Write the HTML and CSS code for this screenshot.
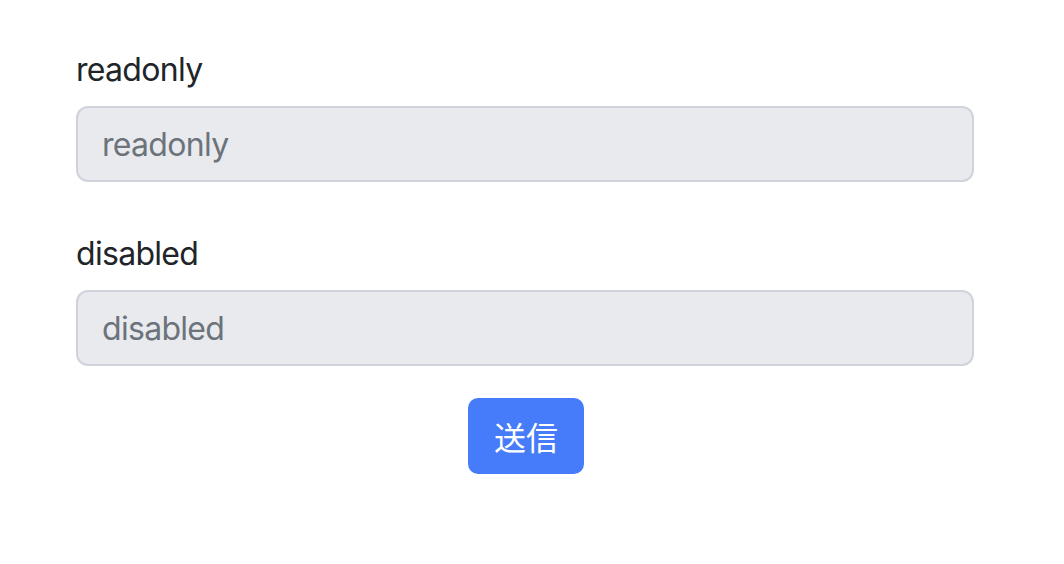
FILE: index.html
```html
<!DOCTYPE html>
<html lang="ja">
<head>
<meta charset="utf-8">
<link rel="stylesheet" href="styles.css">
</head>
<body>
<form class="form">
  <div class="field">
    <label class="label" for="ro">readonly</label>
    <input class="input" id="ro" type="text" value="readonly" readonly>
  </div>
  <div class="field">
    <label class="label" for="dis">disabled</label>
    <input class="input" id="dis" type="text" value="disabled" disabled>
  </div>
  <div class="actions">
    <button class="btn" type="button">送信</button>
  </div>
</form>
</body>
</html>
```
FILE: styles.css
```css
html, body {
  margin: 0;
  padding: 0;
  background: #ffffff;
}
body {
  font-family: Inter, "Noto Sans CJK JP", sans-serif;
  color: #212529;
}
.form {
  width: 898px;
  margin: 46px 0 0 76px;
  display: flex;
  flex-direction: column;
}
.field {
  display: flex;
  flex-direction: column;
  margin-bottom: 48px;
}
.field:nth-child(2) {
  margin-bottom: 32px;
}
.label {
  font-size: 32px;
  line-height: 48px;
  letter-spacing: -0.7px;
  margin-bottom: 12px;
  color: #212529;
}
.input {
  box-sizing: border-box;
  height: 76px;
  width: 100%;
  padding: 12px 24px;
  font-family: Inter, "Noto Sans CJK JP", sans-serif;
  font-size: 32px;
  line-height: 48px;
  letter-spacing: -0.7px;
  color: #6c737b;
  background: #e9eaee;
  border: 2px solid #d0d3d9;
  border-radius: 12px;
  outline: none;
  margin: 0;
}
.input:disabled {
  color: #6c737b;
  -webkit-text-fill-color: #6c737b;
  opacity: 1;
}
.actions {
  display: flex;
  justify-content: center;
  padding-left: 2px;
}
.btn {
  box-sizing: border-box;
  height: 76px;
  width: 116px;
  padding: 12px 24px;
  font-family: "Noto Sans CJK JP", sans-serif;
  font-size: 32px;
  line-height: 48px;
  color: #ffffff;
  background: #467cf9;
  border: 2px solid #467cf9;
  border-radius: 10px;
  cursor: pointer;
}
```
